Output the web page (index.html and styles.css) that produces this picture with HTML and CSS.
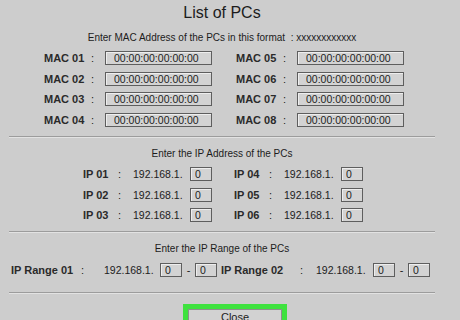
FILE: index.html
```html
<!DOCTYPE html>
<html lang="en">
<head>
    <meta charset="UTF-8">
    <title>List of PCs</title>
    <link rel="stylesheet" href="styles.css">
</head>
<body>
    <div class="dialog">
        <h1 class="title">List of PCs</h1>

        <p class="note">Enter MAC Address of the PCs in this format&nbsp; : xxxxxxxxxxxx</p>
        <div class="mac-grid">
            <div class="mac-row"><span class="label">MAC 01</span><span class="colon">:</span><input class="field mac" value="00:00:00:00:00:00"></div>
            <div class="mac-row"><span class="label">MAC 02</span><span class="colon">:</span><input class="field mac" value="00:00:00:00:00:00"></div>
            <div class="mac-row"><span class="label">MAC 03</span><span class="colon">:</span><input class="field mac" value="00:00:00:00:00:00"></div>
            <div class="mac-row"><span class="label">MAC 04</span><span class="colon">:</span><input class="field mac" value="00:00:00:00:00:00"></div>
            <div class="mac-row"><span class="label">MAC 05</span><span class="colon">:</span><input class="field mac" value="00:00:00:00:00:00"></div>
            <div class="mac-row"><span class="label">MAC 06</span><span class="colon">:</span><input class="field mac" value="00:00:00:00:00:00"></div>
            <div class="mac-row"><span class="label">MAC 07</span><span class="colon">:</span><input class="field mac" value="00:00:00:00:00:00"></div>
            <div class="mac-row"><span class="label">MAC 08</span><span class="colon">:</span><input class="field mac" value="00:00:00:00:00:00"></div>
        </div>

        <hr class="divider">

        <p class="note heading">Enter the IP Address of the PCs</p>
        <div class="ip-grid">
            <div class="ip-row"><span class="label">IP 01</span><span class="colon">:</span><span class="prefix">192.168.1.</span><input class="field octet" value="0"></div>
            <div class="ip-row"><span class="label">IP 02</span><span class="colon">:</span><span class="prefix">192.168.1.</span><input class="field octet" value="0"></div>
            <div class="ip-row"><span class="label">IP 03</span><span class="colon">:</span><span class="prefix">192.168.1.</span><input class="field octet" value="0"></div>
            <div class="ip-row"><span class="label">IP 04</span><span class="colon">:</span><span class="prefix">192.168.1.</span><input class="field octet" value="0"></div>
            <div class="ip-row"><span class="label">IP 05</span><span class="colon">:</span><span class="prefix">192.168.1.</span><input class="field octet" value="0"></div>
            <div class="ip-row"><span class="label">IP 06</span><span class="colon">:</span><span class="prefix">192.168.1.</span><input class="field octet" value="0"></div>
        </div>

        <hr class="divider">

        <p class="note heading">Enter the IP Range of the PCs</p>
        <div class="range-row">
            <div class="range-item">
                <span class="label">IP Range 01</span><span class="colon">:</span><span class="prefix">192.168.1.</span>
                <input class="field octet" value="0"><span class="dash">-</span><input class="field octet" value="0">
            </div>
            <div class="range-item second">
                <span class="label">IP Range 02</span><span class="colon">:</span><span class="prefix">192.168.1.</span>
                <input class="field octet" value="0"><span class="dash">-</span><input class="field octet" value="0">
            </div>
        </div>

        <hr class="divider last">

        <div class="footer">
            <div class="highlight">
                <button type="button" class="close-btn">Close</button>
            </div>
        </div>
    </div>
</body>
</html>
```

FILE: styles.css
```css
body {
    font-family: 'Liberation Sans', Arial, sans-serif;
    background-color: #cdcdcd;
    color: #1c1c1c;
    margin: 0;
    overflow: hidden;
}

.dialog {
    width: 444px;
}

.title {
    margin: 0;
    padding-top: 3px;
    font-size: 16px;
    font-weight: normal;
    line-height: 20px;
    text-align: center;
}

.note {
    margin: 9px 0 0;
    font-size: 10px;
    line-height: 12px;
    text-align: center;
}

.note.heading {
    margin-top: 10px;
}

.label {
    font-size: 11px;
    font-weight: bold;
    color: #2a2a2a;
}

.colon {
    font-size: 11px;
}

.prefix {
    font-size: 10.5px;
}

.field {
    box-sizing: border-box;
    height: 14px;
    margin: 0;
    padding: 0 0 0 4px;
    border: 1px solid #5e5e5e;
    box-shadow: inset 1px 1px 0 #eeeeee;
    background-color: #d3d3d3;
    font-family: inherit;
    font-size: 10.5px;
    color: #222;
    outline: none;
}

.field.mac {
    width: 107px;
    padding-left: 8px;
}

.field.octet {
    width: 22px;
}

/* MAC block */
.mac-grid {
    display: grid;
    grid-template-columns: 168px 168px;
    grid-template-rows: repeat(4, 14px);
    grid-auto-flow: column;
    column-gap: 24px;
    row-gap: 6.7px;
    margin: 7px 0 0 44px;
}

.mac-row {
    display: flex;
    align-items: center;
}

.mac-row .label {
    width: 47px;
}

.mac-row .colon {
    width: 14px;
}

.divider {
    margin: 9px 9px 0 9px;
    height: 0;
    border: none;
    border-top: 1px solid #9c9c9c;
    border-bottom: 1px solid #e2e2e2;
}

/* IP block */
.ip-grid {
    display: grid;
    grid-template-columns: 129px 129px;
    grid-template-rows: repeat(3, 14px);
    grid-auto-flow: column;
    column-gap: 22px;
    row-gap: 6.5px;
    margin: 7px 0 0 83px;
}

.ip-row {
    display: flex;
    align-items: center;
}

.ip-row .label {
    width: 35px;
}

.ip-row .colon {
    width: 15px;
}

.ip-row .prefix {
    width: 57px;
}

/* Range block */
.range-row {
    display: flex;
    gap: 4px;
    margin: 8px 0 0 11px;
}

.range-item {
    display: flex;
    align-items: center;
    height: 14px;
}

.range-item .label {
    width: 70px;
}

.range-item .colon {
    width: 23px;
}

.range-item .prefix {
    width: 56px;
}

.range-item.second .label {
    width: 79px;
}

.range-item.second .colon {
    width: 16px;
}

.range-item.second .prefix {
    width: 57px;
}

.dash {
    width: 13px;
    font-size: 11px;
    text-align: center;
}

.divider.last {
    margin-top: 15px;
}

.footer {
    display: flex;
    justify-content: center;
    padding-left: 26px;
    margin-top: 10px;
}

.highlight {
    width: 104px;
    height: 22px;
    box-sizing: border-box;
    border: 5px solid #3fe23f;
    border-bottom: none;
    background-color: #cdcdcd;
}

.close-btn {
    display: block;
    width: 100%;
    height: 17px;
    margin: 0;
    padding: 0 0 2px;
    border: 1px solid #8e8e8e;
    border-bottom: none;
    background-color: #d2d2d2;
    font-family: inherit;
    font-size: 11px;
    line-height: 12px;
    color: #1c1c1c;
    text-align: center;
}
```
